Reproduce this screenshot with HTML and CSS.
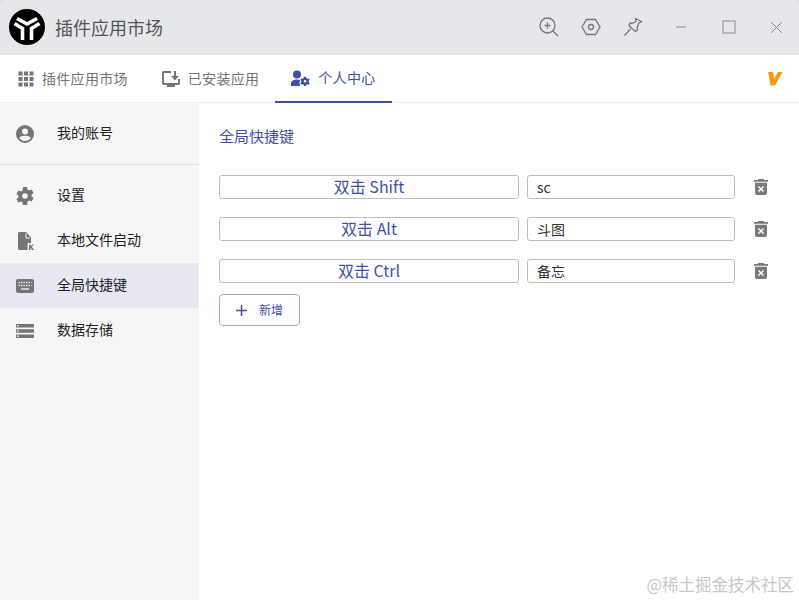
FILE: index.html
```html
<!DOCTYPE html>
<html lang="zh-CN">
<head>
    <meta charset="UTF-8">
    <title>插件应用市场</title>
    <link rel="stylesheet" href="styles.css">
</head>
<body>
    <div class="window">
        <!-- Title bar -->
        <header class="titlebar">
            <svg class="logo" width="36" height="36" viewBox="0 0 36 36">
                <circle cx="18" cy="18" r="18" fill="#000"/>
                <path d="M8 9.500L18 15l10-5.500M5.500 14.500l8 5V31M30.500 14.500l-8 5V31" fill="none" stroke="#fff" stroke-width="3.600"/>
            </svg>
            <span class="app-title">插件应用市场</span>
            <div class="title-actions">
                <svg class="tool-icon" width="20" height="20" viewBox="0 0 20 20">
                    <circle cx="8.500" cy="8.500" r="7.500"/>
                    <path d="M8.500 5.500v6M5.500 8.500h6M14 14l5 5"/>
                </svg>
                <svg class="tool-icon" width="20" height="20" viewBox="0 0 20 20">
                    <path d="M5.500 2.500h9L19 10l-4.500 7.500h-9L1 10z"/>
                    <circle cx="10" cy="10" r="2.500"/>
                </svg>
                <svg class="tool-icon" width="20" height="20" viewBox="0 0 20 20">
                    <path d="M12.500 1.500l6 3-3 2-1.500 5 .5 1.500-2 1.500-3.500-3-3-3 1-2.500 2 .5 4-2z"/>
                    <path d="M7.500 12L1.500 18.500"/>
                </svg>
            </div>
            <div class="window-controls">
                <svg class="ctl-icon" width="12" height="12" viewBox="0 0 12 12"><path d="M1 6h10"/></svg>
                <svg class="ctl-icon" width="14" height="14" viewBox="0 0 14 14"><rect x="1" y="1" width="12" height="12"/></svg>
                <svg class="ctl-icon" width="13" height="13" viewBox="0 0 13 13"><path d="M1 1l11 11M12 1L1 12"/></svg>
            </div>
        </header>

        <!-- Tabs -->
        <nav class="tabs">
            <div class="tab">
                <svg class="tab-icon" width="16" height="16" viewBox="0 0 16 16" fill="#757575">
                    <rect x="0.500" y="0.500" width="4" height="4"/><rect x="6" y="0.500" width="4" height="4"/><rect x="11.500" y="0.500" width="4" height="4"/>
                    <rect x="0.500" y="6" width="4" height="4"/><rect x="6" y="6" width="4" height="4"/><rect x="11.500" y="6" width="4" height="4"/>
                    <rect x="0.500" y="11.500" width="4" height="4"/><rect x="6" y="11.500" width="4" height="4"/><rect x="11.500" y="11.500" width="4" height="4"/>
                </svg>
                <span class="tab-label">插件应用市场</span>
            </div>
            <div class="tab">
                <svg class="tab-icon" width="18" height="18" viewBox="0 0 18 18" fill="#757575">
                    <path d="M2 1h7v2H2v10h14V9h2v4a2 2 0 0 1-2 2h-3v2H5v-2H2a2 2 0 0 1-2-2V3a2 2 0 0 1 2-2z"/>
                    <path d="M12 1h2v5h3l-4 4.500L9 6h3z"/>
                </svg>
                <span class="tab-label">已安装应用</span>
            </div>
            <div class="tab tab-active">
                <svg class="tab-icon" width="19" height="17" viewBox="0 0 19 17" fill="#3f51a5">
                    <circle cx="6" cy="4.500" r="4"/>
                    <path d="M0 16v-2.500C0 11 3 9.500 6 9.500c1.200 0 2.300.2 3.200.5-.5 1-.7 1.900-.7 3 0 1.100.3 2.100.9 3z"/>
                    <path fill-rule="evenodd" d="M13.500 8.500h2l.3 1.300 1.200.6 1.200-.5 1 1.700-1 .9v1.300l1 .9-1 1.700-1.200-.5-1.200.6-.3 1.300h-2l-.3-1.300-1.200-.6-1.200.5-1-1.700 1-.9v-1.300l-1-.9 1-1.700 1.200.5 1.200-.6zm1 3.200a1.300 1.300 0 1 0 0 2.600 1.300 1.300 0 0 0 0-2.600z" transform="translate(-.5 -1.700)"/>
                </svg>
                <span class="tab-label">个人中心</span>
            </div>
            <svg class="brand-v" width="16" height="15" viewBox="0 0 16 15">
                <path d="M1 1h5l1 7 4-7h4.500L8 14.500H3.500z" fill="#f59a0c"/>
            </svg>
        </nav>

        <div class="body">
            <!-- Sidebar -->
            <aside class="sidebar">
                <div class="menu-group">
                    <div class="menu-item">
                        <svg class="menu-icon" width="18" height="18" viewBox="0 0 18 18" fill="#757575">
                            <path fill-rule="evenodd" d="M9 0a9 9 0 1 1 0 18A9 9 0 0 1 9 0zm0 3.500a3 3 0 1 0 0 6 3 3 0 0 0 0-6zM9 16c2.300 0 4.400-1.100 5.700-2.900C14.500 11.600 11.300 10.800 9 10.800s-5.500.8-5.700 2.300C4.600 14.900 6.700 16 9 16z"/>
                        </svg>
                        <span class="menu-label">我的账号</span>
                    </div>
                </div>
                <div class="menu-group menu-group-line">
                    <div class="menu-item">
                        <svg class="menu-icon" width="18" height="18" viewBox="0 0 18 18" fill="#757575">
                            <path fill-rule="evenodd" d="M7 0h4l.5 2.500 1.600.9 2.500-.9 2 3.500-2 1.600v1.800l2 1.600-2 3.500-2.500-.9-1.600.9L11 18H7l-.5-2.500-1.600-.9-2.500.9-2-3.500 2-1.600V8.600L.4 7l2-3.500 2.500.9 1.600-.9zm2 6.200a2.800 2.800 0 1 0 0 5.600 2.800 2.800 0 0 0 0-5.600z"/>
                        </svg>
                        <span class="menu-label">设置</span>
                    </div>
                    <div class="menu-item">
                        <svg class="menu-icon" width="18" height="18" viewBox="0 0 18 18" fill="#757575">
                            <path d="M3.500 0H10l5 5.500V11h-3.500v7h-8A1.500 1.500 0 0 1 2 16.500v-15A1.500 1.500 0 0 1 3.500 0z"/>
                            <path d="M10 1.500V6h4" fill="none" stroke="#f6f6f6" stroke-width="1"/>
                            <path d="M13 12.500h1.500v1.800l1.800-1.800H18l-2.200 2.200L18 18h-1.800l-1.700-2.500V18H13z"/>
                        </svg>
                        <span class="menu-label">本地文件启动</span>
                    </div>
                    <div class="menu-item menu-item-active">
                        <svg class="menu-icon" width="18" height="14" viewBox="0 0 18 14">
                            <rect width="18" height="14" rx="2" fill="#757575"/>
                            <path d="M2.500 3.500h13M2.500 6.500h13" stroke="#e8e8f2" stroke-width="1.500" stroke-dasharray="1.500 1"/>
                            <path d="M5 10h8" stroke="#e8e8f2" stroke-width="1.500"/>
                        </svg>
                        <span class="menu-label">全局快捷键</span>
                    </div>
                    <div class="menu-item">
                        <svg class="menu-icon" width="18" height="14" viewBox="0 0 18 14" fill="#757575">
                            <path fill-rule="evenodd" d="M0 0h18v3.500H0zM1 1v1.500h1.500V1zM0 5.200h18v3.500H0zM1 6.200v1.500h1.500V6.200zM0 10.500h18V14H0zM1 11.500V13h1.500v-1.500z"/>
                        </svg>
                        <span class="menu-label">数据存储</span>
                    </div>
                </div>
            </aside>

            <!-- Shortcut settings -->
            <main class="content">
                <h2 class="section-title">全局快捷键</h2>
                <div class="shortcut-list">
                    <div class="shortcut-row">
                        <div class="key-box">双击 Shift</div>
                        <div class="value-box">sc</div>
                        <svg class="trash" width="14" height="16" viewBox="0 0 14 16"><use href="#trash-shape"/></svg>
                    </div>
                    <div class="shortcut-row">
                        <div class="key-box">双击 Alt</div>
                        <div class="value-box">斗图</div>
                        <svg class="trash" width="14" height="16" viewBox="0 0 14 16"><use href="#trash-shape"/></svg>
                    </div>
                    <div class="shortcut-row">
                        <div class="key-box">双击 Ctrl</div>
                        <div class="value-box">备忘</div>
                        <svg class="trash" width="14" height="16" viewBox="0 0 14 16"><use href="#trash-shape"/></svg>
                    </div>
                </div>
                <button class="add-btn">
                    <svg width="13" height="13" viewBox="0 0 13 13"><path d="M6.500 1v11M1 6.500h11" stroke="#3f51a5" stroke-width="1.500"/></svg>
                    <span class="add-label">新增</span>
                </button>
            </main>
        </div>
        <div class="watermark">@稀土掘金技术社区</div>
    </div>

    <svg width="0" height="0" class="defs">
        <symbol id="trash-shape" viewBox="0 0 14 16">
            <path fill="#7a7a7a" fill-rule="evenodd" d="M4.500 0h5l1 1H14v1.700H0V1h3.500zM1 3.700h12V14a2 2 0 0 1-2 2H3a2 2 0 0 1-2-2zM5 7l-1 1 2 2-2 2 1 1 2-2 2 2 1-1-2-2 2-2-1-1-2 2z"/>
        </symbol>
    </svg>
</body>
</html>
```

FILE: styles.css
```css
/* Global Styles */
* {
    box-sizing: border-box;
}

body {
    margin: 0;
    background-color: #e0e0e4;
    font-family: "Noto Sans CJK SC", "Liberation Sans", sans-serif;
    color: #333;
}

.defs {
    position: absolute;
}

/* Window */
.window {
    position: relative;
    width: 799px;
    height: 600px;
    display: flex;
    flex-direction: column;
    background-color: #fff;
    border-radius: 8px 8px 0 0;
    overflow: hidden;
}

/* Title bar */
.titlebar {
    height: 55px;
    flex: none;
    display: flex;
    align-items: center;
    padding-left: 9px;
    background-color: #e6e7eb;
    border-bottom: 1px solid #e0e1e4;
}

.app-title {
    margin-left: 10px;
    font-size: 18px;
    color: #555;
}

.title-actions {
    margin-left: auto;
    display: flex;
    gap: 22px;
    align-items: center;
}

.tool-icon {
    fill: none;
    stroke: #76767a;
    stroke-width: 1.3;
}

.window-controls {
    margin-left: 32px;
    width: 124px;
    padding-right: 16px;
    display: flex;
    justify-content: space-between;
    align-items: center;
}

.ctl-icon {
    fill: none;
    stroke: #8a8a8e;
    stroke-width: 1;
}

/* Tabs */
.tabs {
    height: 48px;
    flex: none;
    display: flex;
    align-items: stretch;
    padding-left: 2px;
    border-bottom: 1px solid #eee;
}

.tab {
    display: flex;
    align-items: center;
    gap: 8px;
    padding: 0 16px;
    font-size: 14px;
    letter-spacing: 0.3px;
    color: #757575;
}

.tab:first-child {
    padding-right: 18px;
}

.tab-label {
    margin-bottom: 2px;
}

.tab-active {
    color: #3f51a5;
    border-bottom: 2px solid #3f51a5;
    margin-bottom: -1px;
}

.brand-v {
    margin-left: auto;
    margin-right: 16px;
    align-self: center;
}

/* Layout */
.body {
    flex: 1;
    display: flex;
    min-height: 0;
}

/* Sidebar */
.sidebar {
    width: 199px;
    flex: none;
    background-color: #f6f6f6;
}

.menu-group {
    padding: 8px 0;
}

.menu-group-line {
    border-top: 1px solid #dedede;
}

.menu-item {
    height: 45px;
    display: flex;
    align-items: center;
    padding-left: 16px;
    font-size: 14px;
    color: #222;
}

.menu-label {
    margin-bottom: 4px;
}

.menu-icon {
    width: 18px;
    margin-right: 23px;
    flex: none;
}

.menu-item-active {
    background-color: #e8e8f2;
}

/* Content */
.content {
    flex: 1;
    padding: 0 20px;
}

.section-title {
    margin: 22px 0 28px;
    font-size: 15px;
    line-height: 22px;
    font-weight: 400;
    color: #3f51a5;
}

.shortcut-row {
    display: flex;
    align-items: center;
    margin-bottom: 18px;
}

.key-box,
.value-box {
    height: 24px;
    border: 1px solid #bdbdbd;
    border-radius: 3px;
}

.key-box {
    width: 300px;
    text-align: center;
    font-size: 16px;
    line-height: 20px;
    color: #3f51a5;
}

.value-box {
    width: 208px;
    margin-left: 8px;
    padding-left: 9px;
    font-size: 14px;
    line-height: 22px;
    color: #333;
}

.trash {
    margin-left: 19px;
}

.add-btn {
    display: flex;
    align-items: center;
    gap: 11px;
    width: 81px;
    height: 32px;
    margin-top: -7px;
    padding: 0 0 0 15px;
    background-color: #fff;
    border: 1px solid #a5a9cf;
    border-radius: 4px;
    font-family: inherit;
    font-size: 12px;
    color: #3f51a5;
}

.add-label {
    margin-bottom: 2px;
}

/* Watermark */
.watermark {
    position: absolute;
    right: 5px;
    bottom: 4px;
    font-size: 16.5px;
    color: #c8c8c8;
}
```
